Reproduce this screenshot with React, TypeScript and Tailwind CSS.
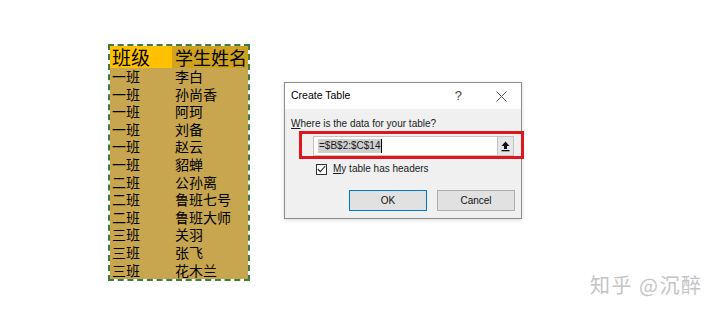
import React from "react"

const rows: [string, string][] = [
  ["一班", "李白"],
  ["一班", "孙尚香"],
  ["一班", "阿珂"],
  ["一班", "刘备"],
  ["一班", "赵云"],
  ["一班", "貂蝉"],
  ["二班", "公孙离"],
  ["二班", "鲁班七号"],
  ["二班", "鲁班大师"],
  ["三班", "关羽"],
  ["三班", "张飞"],
  ["三班", "花木兰"],
]

const cjk = "font-['Noto_Sans_CJK_SC',sans-serif]"
const ui = "font-['Liberation_Sans',Arial,sans-serif]"

function Sheet() {
  return (
    <div className={`ml-[108px] mt-[44px] w-[142px] border-2 border-dashed border-[#3b7d3f] bg-[#c8a64f] bg-clip-padding ${cjk} text-black`}>
      {/* header */}
      <div className="flex h-[22px] items-center">
        <div className="h-full w-[62px] bg-[#ffc000] pl-[2px] text-[19px] leading-[22px]">班级</div>
        <div className="h-full flex-1 bg-[#cfa21f] pl-[3px] text-[18px] leading-[22px]">学生姓名</div>
      </div>
      {rows.map(([cls, name], i) => (
        <div key={i} className="flex h-[17.6px] text-[14px] leading-[17.6px]">
          <div className="w-[62px] pl-[2px]">{cls}</div>
          <div className="pl-[3px]">{name}</div>
        </div>
      ))}
    </div>
  )
}

function Dialog() {
  return (
    <div className={`ml-[34px] mt-[82px] w-[238px] border border-[#8c8c8c] bg-[#f0f0f0] ${ui} text-[#1a1a1a] shadow-[0_1px_4px_rgba(0,0,0,0.15)]`}>
      {/* title bar */}
      <div className="flex h-[26px] items-center bg-white pl-[6px] pr-[14px]">
        <span className="text-[10.5px] text-black">Create Table</span>
        <span className="ml-auto mr-[34px] text-[13px] text-[#444]">?</span>
        <svg width="11" height="11" viewBox="0 0 11 11" className="text-[#555]">
          <path d="M0.5 0.5L10.5 10.5M10.5 0.5L0.5 10.5" stroke="currentColor" strokeWidth="1" />
        </svg>
      </div>

      {/* body */}
      <div className="px-[6px] pb-[7px] pt-[9px]">
        <div className="h-[12px] text-[10px] leading-[12px]">
          <span className="underline">W</span>here is the data for your table?
        </div>

        <div className="relative ml-[22px] mt-[6px] flex h-[20px] w-[201px] border border-[#c4c4c4] bg-white">
          <div className="flex flex-1 items-center pl-[4px]">
            <span className="bg-[#cfcfcf] px-[1px] text-[10px] leading-[14px]">=$B$2:$C$14</span>
            <span className="h-[14px] w-px bg-black" />
          </div>
          <div className="flex w-[16px] items-center justify-center border-l border-[#c4c4c4] bg-[#e6e6e6]">
            <svg width="9" height="11" viewBox="0 0 9 11">
              <path d="M4.5 0.5L8.5 5H6V8H3V5H0.5Z" fill="#111" />
              <rect x="0.5" y="9" width="8" height="1.3" fill="#111" />
            </svg>
          </div>
          {/* red annotation */}
          <div className="pointer-events-none absolute left-[-15px] right-[-11px] top-[-6px] bottom-[-4px] border-[3.5px] border-[#e0161e]" />
        </div>

        <div className="ml-[25px] mt-[7px] flex items-center gap-[6px]">
          <div className="flex h-[11px] w-[11px] items-center justify-center border border-[#333] bg-white">
            <svg width="9" height="8" viewBox="0 0 9 8">
              <path d="M0.8 4L3.3 6.6L8.3 1" fill="none" stroke="#222" strokeWidth="1.1" />
            </svg>
          </div>
          <span className="text-[10px] leading-[12px]">
            <span className="underline">M</span>y table has headers
          </span>
        </div>

        <div className="mt-[15px] flex justify-end gap-[10px]">
          <button className="h-[21px] w-[78px] border border-[#0078d7] bg-[#e1e1e1] text-[10px] text-[#111]">OK</button>
          <button className="h-[21px] w-[78px] border border-[#adadad] bg-[#e1e1e1] text-[10px] text-[#111]">Cancel</button>
        </div>
      </div>
    </div>
  )
}

export default function App() {
  return (
    <div className="relative flex h-[313px] w-[720px] items-start overflow-hidden bg-white">
      <Sheet />
      <Dialog />
      <div className={`absolute left-[590px] top-[273px] text-[20px] leading-[24px] tracking-[1.5px] text-[#c4c4c4] ${cjk}`}>
        知乎 @沉醉
      </div>
    </div>
  )
}
